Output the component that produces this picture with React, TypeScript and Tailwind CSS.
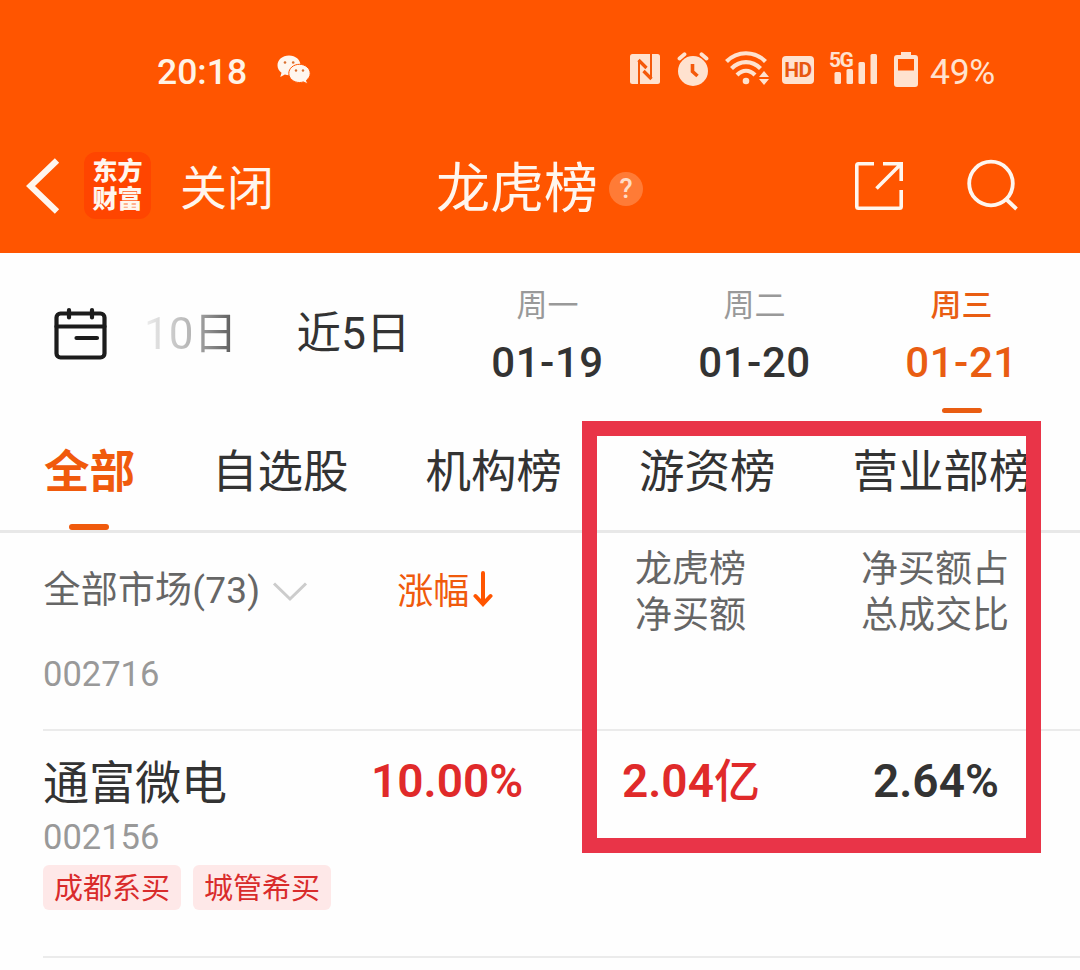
type DateItem = { week: string; date: string; active?: boolean };

const dates: DateItem[] = [
  { week: "周一", date: "01-19" },
  { week: "周二", date: "01-20" },
  { week: "周三", date: "01-21", active: true },
];

const tabs = ["全部", "自选股", "机构榜", "游资榜", "营业部榜"];

const tags = ["成都系买", "城管希买"];

const WechatIcon = () => (
  <svg className="w-[34px] h-[30px]" viewBox="0 0 34 30">
    <path
      fill="#fff6ee"
      d="M12 .5C5.4.5.5 4.8.5 10.300c0 3 1.500 5.700 4 7.500L3.300 22l4.600-2.400c1.300.4 2.700.6 4.100.6 6.600 0 11.500-4.400 11.500-9.900S18.600.5 12 .5z"
    />
    <path
      fill="#fff6ee"
      stroke="#ff5500"
      strokeWidth={1}
      d="M22.500 9.300c-6 0-10.700 4-10.700 9.100s4.700 9.100 10.700 9.100c1.400 0 2.700-.2 3.900-.6l4.200 2-1.100-3.700c2.200-1.600 3.700-4 3.700-6.800 0-5.100-4.900-9.100-10.700-9.100z"
    />
    <circle cx="8" cy="7.500" r="1.300" fill="#d9702f" />
    <circle cx="16.200" cy="7.500" r="1.300" fill="#d9702f" />
    <circle cx="19" cy="15.500" r="1.200" fill="#d9702f" />
    <circle cx="26" cy="15.500" r="1.200" fill="#d9702f" />
  </svg>
);

const NfcIcon = () => (
  <svg className="w-[30px] h-[30px]" viewBox="0 0 30 30">
    <rect width="30" height="30" rx="2.500" fill="#ffe2cf" />
    <g fill="none" stroke="#f4590a">
      <path strokeWidth={2} d="M9 30V6.500M21 0v24.500" />
      <path strokeWidth={3.200} d="M8.500 6l8 8M21.500 25l-8-8" />
    </g>
  </svg>
);

const AlarmIcon = () => (
  <svg className="w-8 h-[34px]" viewBox="0 0 32 34">
    <circle cx="16" cy="19" r="15" fill="#ffe2cf" />
    <path
      fill="none"
      stroke="#ffe2cf"
      strokeWidth={3.800}
      strokeLinecap="round"
      d="M2.500 6.500l5-4.200M29.500 6.500l-5-4.200"
    />
    <path
      fill="none"
      stroke="#f4590a"
      strokeWidth={3.600}
      d="M15.500 12v7.500l5 4.500"
    />
  </svg>
);

const WifiIcon = () => (
  <svg className="w-[44px] h-[34px]" viewBox="0 0 44 34">
    <g fill="none" stroke="#ffe2cf" strokeWidth={4.200}>
      <path d="M1.500 10.500C12.500-.5 29.500-.5 40.500 10.500" />
      <path d="M6.500 17.500c8.500-8.500 20.500-8.500 29 0" />
      <path d="M12 24c5.500-5.500 12.500-5.500 18 0" />
    </g>
    <circle cx="21" cy="30" r="3.300" fill="#ffe2cf" />
    <path fill="#ffe2cf" d="M34 26l5-6 5 6zM34 28h10l-5 6z" />
  </svg>
);

const SignalIcon = () => (
  <svg className="w-[46px] h-[34px]" viewBox="0 0 46 34">
    <g fill="#ffe2cf">
      <rect x="3.500" y="22" width="6.500" height="12" rx="1.500" />
      <rect x="15.500" y="19" width="6.500" height="15" rx="1.500" />
      <rect x="27.500" y="12" width="6.500" height="22" rx="1.500" />
      <rect x="39.500" y="4" width="6.500" height="30" rx="1.500" />
    </g>
  </svg>
);

const BatteryIcon = () => (
  <svg className="w-6 h-[35px]" viewBox="0 0 24 35">
    <path
      fill="#ffe2cf"
      fillRule="evenodd"
      d="M7 0h10v3h4a3 3 0 013 3v26a3 3 0 01-3 3H3a3 3 0 01-3-3V6a3 3 0 013-3h4zM4 7v11.500h16V7z"
    />
  </svg>
);

const StatusBar = () => (
  <div className="flex h-[121px] items-start text-[#ffe2cf]">
    <div className="ml-[157px] mt-[54px] w-[90px] text-[35.5px] leading-9 font-medium text-[#fff3e6]">
      20:18
    </div>
    <div className="ml-[30px] mt-[55px]">
      <WechatIcon />
    </div>
    <div className="ml-auto mt-[54px]">
      <NfcIcon />
    </div>
    <div className="ml-[17px] mt-[52px]">
      <AlarmIcon />
    </div>
    <div className="ml-4 mt-[51px]">
      <WifiIcon />
    </div>
    <div className="ml-[13px] mt-[56px] flex h-7 w-8 items-center justify-center rounded bg-[#ffe2cf]">
      <span className="text-[21px] leading-none font-bold tracking-tight text-[#e8560f]">
        HD
      </span>
    </div>
    <div className="relative ml-[17px] mt-[50px]">
      <SignalIcon />
      <span className="absolute -left-0.5 top-0.5 bg-[#ff5500] pr-px text-[21px] leading-[17px] font-bold tracking-[-1.500px]">
        5G
      </span>
    </div>
    <div className="ml-[17px] mt-[52px]">
      <BatteryIcon />
    </div>
    <div className="ml-3 mr-[85px] mt-[54px] w-[65px] text-[35.5px] leading-9 tracking-[-0.3px]">
      49%
    </div>
  </div>
);

const NavBar = () => (
  <div className="flex h-[132px] items-start text-[#fff6ee]">
    <svg
      className="ml-[25px] mt-[36px] h-[58px] w-9"
      viewBox="0 0 36 58"
      fill="none"
      stroke="currentColor"
      strokeWidth={6.200}
    >
      <path d="M32 3.500L5.500 29 32 54.500" />
    </svg>
    <div className="ml-[23px] mt-[31px] flex h-[67px] w-[67px] flex-col items-center justify-center rounded-xl bg-[#ff4500] text-[25px] leading-[28px] font-black">
      <span>东方</span>
      <span>财富</span>
    </div>
    <div className="ml-[29px] mt-[44px] w-[94px] text-[47px] leading-[48px]">
      关闭
    </div>
    <div className="ml-[162px] mt-[42px] w-[162px] text-[54px] leading-[54px]">
      龙虎榜
    </div>
    <div className="ml-[11px] mt-[51px] flex h-[34px] w-[34px] items-center justify-center rounded-full bg-[#ff7b36] text-[27px] leading-none font-medium text-[#ffdcc6]">
      ?
    </div>
    <svg
      className="ml-auto mt-[40px] h-[50px] w-[50px]"
      viewBox="0 0 50 50"
      fill="none"
      stroke="currentColor"
      strokeWidth={3.600}
    >
      <path d="M20 2.800H4.500Q2.800 2.800 2.800 4.500v41q0 1.700 1.700 1.700h41q1.700 0 1.700-1.700V29" />
      <path d="M29 2.800h18.200V20M47.200 2.800L22.500 27.500" />
    </svg>
    <svg
      className="ml-[63px] mr-[61px] mt-[38px] h-[52px] w-[52px]"
      viewBox="0 0 52 52"
      fill="none"
      stroke="currentColor"
      strokeWidth={3.800}
    >
      <circle cx="24" cy="24.500" r="21.800" />
      <path d="M39 40l10.500 10" />
    </svg>
  </div>
);

const DateBar = () => (
  <div className="flex h-[167px] items-start text-[#333]">
    <svg
      className="ml-[53px] mt-[53px] h-[55px] w-[55px]"
      viewBox="0 0 55 55"
      fill="none"
      stroke="#1c1c1c"
      strokeWidth={4.200}
      strokeLinecap="round"
    >
      <rect x="3.500" y="7.500" width="48" height="44" rx="4" />
      <path d="M3.500 20.500h48M16 4v7.500M39 4v7.500M23.500 32H44" />
    </svg>
    <div className="ml-[36px] mt-[56px] bg-linear-to-r from-[#efefef] via-[#b5b5b5] to-[#555] bg-clip-text text-[44px] leading-[50px] text-transparent">
      10日
    </div>
    <div className="ml-[59px] mt-[56px] text-[44.5px] leading-[50px]">
      近5日
    </div>
    <div className="ml-auto mr-[15px] flex">
      {dates.map((item) => (
        <div
          key={item.date}
          className={
            item.active
              ? "flex w-[207px] flex-col items-center font-medium text-[#e95d12]"
              : "flex w-[207px] flex-col items-center"
          }
        >
          <span
            className={
              item.active
                ? "mt-[33px] text-[31px] leading-[40px]"
                : "mt-[33px] text-[31px] leading-[40px] text-[#999]"
            }
          >
            {item.week}
          </span>
          <span className="mt-[12px] text-[42px] leading-[50px] font-medium tracking-[0.5px]">
            {item.date}
          </span>
          {item.active && (
            <i className="mt-[20px] h-[5px] w-10 rounded-full bg-[#e95d12]" />
          )}
        </div>
      ))}
    </div>
  </div>
);

const TabBar = () => (
  <div className="flex h-[113px] gap-[77px] overflow-hidden border-b-[3px] border-[#e8e8e8] pl-[44px] text-[45.5px] leading-[60px] whitespace-nowrap text-[#333]">
    {tabs.map((tab, i) => (
      <div
        key={tab}
        className={
          i === 0
            ? "flex shrink-0 flex-col items-center pt-[23px] font-bold text-[#f05a0c]"
            : "shrink-0 pt-[23px]"
        }
      >
        <span>{tab}</span>
        {i === 0 && (
          <i className="mt-[21px] mr-0.5 h-1.5 w-10 rounded-full bg-[#f05a0c]" />
        )}
      </div>
    ))}
  </div>
);

const FilterRow = () => (
  <div className="flex h-[107px] items-start text-[37px] text-[#666]">
    <div className="ml-[43.5px] mt-[34px] leading-[48px] tracking-[0.2px]">
      全部市场(73)
    </div>
    <svg
      className="ml-3 mt-[48px] h-[22px] w-9"
      viewBox="0 0 36 22"
      fill="none"
      stroke="#ccc"
      strokeWidth={3}
    >
      <path d="M2 2.500l16 15.500 16-15.500" />
    </svg>
    <div className="ml-[89px] mt-[35px] flex text-[36px] leading-[48px] text-[#f05a0c]">
      涨幅
      <svg
        className="ml-1 mt-[3px] h-9 w-5"
        viewBox="0 0 20 36"
        fill="none"
        stroke="#ff5500"
        strokeWidth={4}
        strokeLinecap="round"
      >
        <path d="M10 2v31M2.500 25l7.500 8 7.500-8" />
      </svg>
    </div>
    <div className="ml-auto mt-[14px] leading-[46px]">
      龙虎榜
      <br />
      净买额
    </div>
    <div className="ml-[115px] mr-[71px] mt-[14px] leading-[46px]">
      净买额占
      <br />
      总成交比
    </div>
  </div>
);

const StockList = () => (
  <div className="pl-[43px]">
    <div className="h-[91px] border-b-2 border-[#ebebeb] pt-[14px] text-[34.5px] leading-[40px] text-[#999]">
      002716
    </div>
    <div className="h-[227px] border-b-2 border-[#ebebeb]">
      <div className="flex items-start pt-[20px] text-[46px] leading-[60px] text-[#333]">
        <div className="mt-0.5 w-[328px]">通富微电</div>
        <div className="w-[251px] font-semibold text-[#e02a2a]">10.00%</div>
        <div className="w-[251px] font-semibold text-[#e02a2a]">
          2.04<span className="font-medium">亿</span>
        </div>
        <div className="font-semibold">2.64%</div>
      </div>
      <div className="mt-1 text-[34.5px] leading-[40px] text-[#999]">
        002156
      </div>
      <div className="mt-[8px] flex gap-3">
        {tags.map((tag) => (
          <span
            key={tag}
            className="h-[45px] w-[138px] rounded-md bg-[#fee8e8] pt-0.5 text-center text-[29px] leading-[45px] text-[#d92b2b]"
          >
            {tag}
          </span>
        ))}
      </div>
    </div>
  </div>
);

const App = () => {
  return (
    <div className="relative h-[970px] w-[1080px] overflow-hidden bg-[#fefefe] font-[Roboto,'Noto_Sans_CJK_SC',sans-serif]">
      <header className="h-[253px] bg-[#ff5500]">
        <StatusBar />
        <NavBar />
      </header>
      <DateBar />
      <TabBar />
      <FilterRow />
      <StockList />

      {/* highlight frame over the last two columns */}
      <div className="absolute left-[582px] top-[421px] h-[432px] w-[459px] border-[15px] border-[#e93448]" />
    </div>
  );
};

export default App;
